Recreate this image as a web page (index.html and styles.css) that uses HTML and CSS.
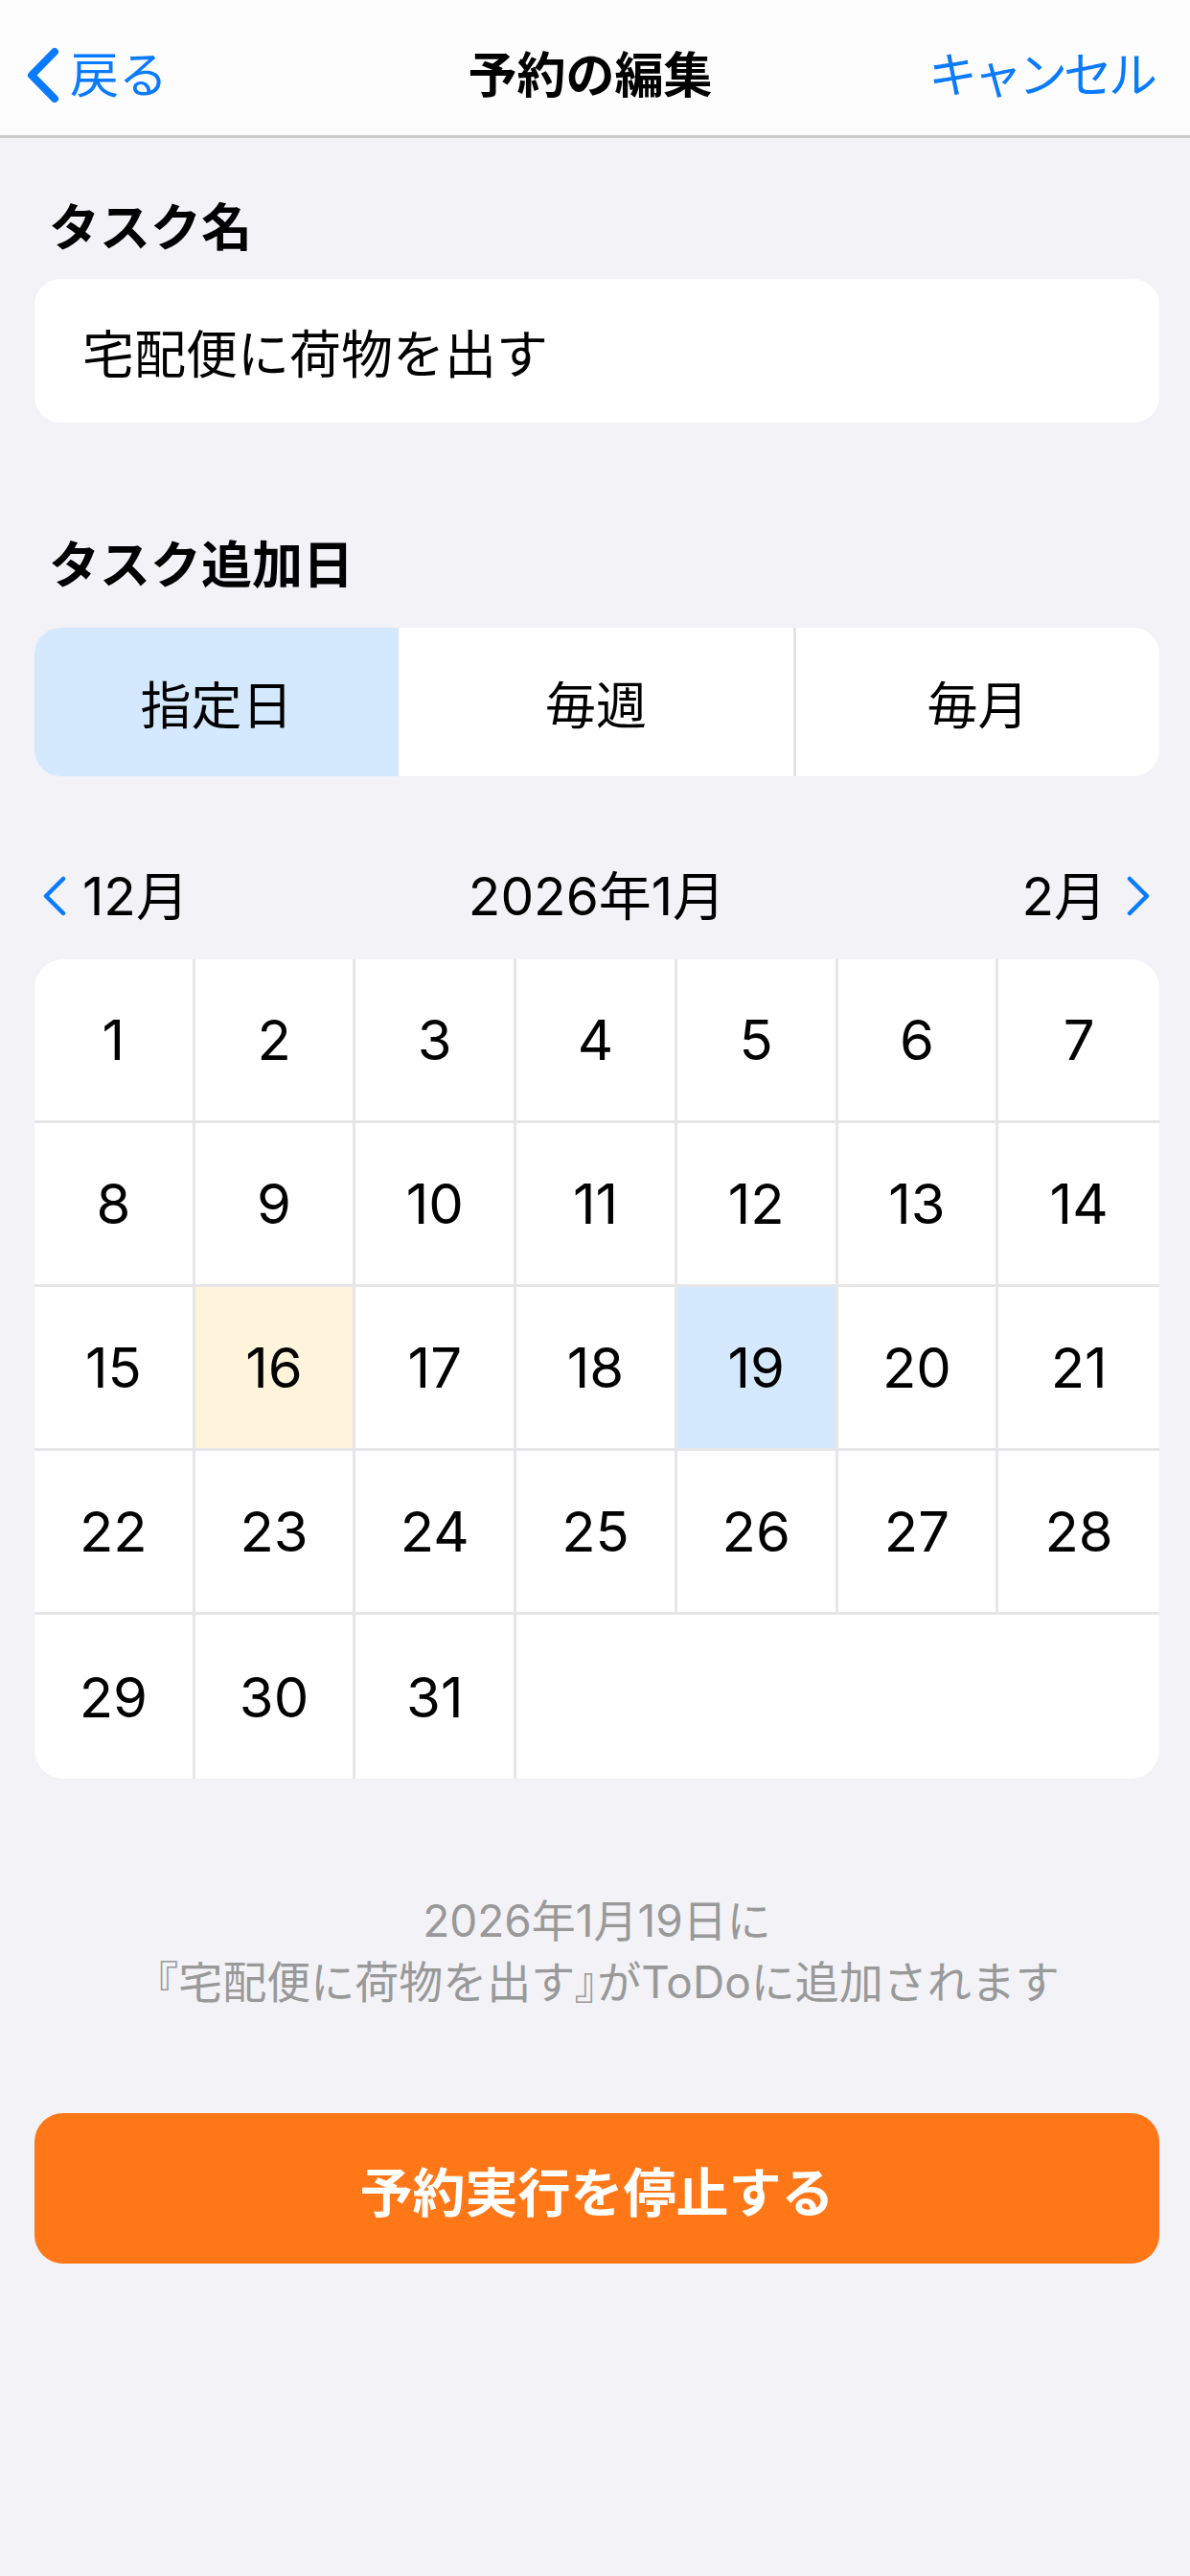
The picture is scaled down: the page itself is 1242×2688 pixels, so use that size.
FILE: index.html
```html
<!DOCTYPE html>
<html lang="ja">
<head>
<meta charset="UTF-8">
<meta name="viewport" content="width=device-width, initial-scale=1.0">
<title>予約の編集</title>
<link rel="stylesheet" href="styles.css">
</head>
<body>
<div class="page">
  <div class="nav">
    <div class="back">
      <svg class="back-icon" width="34" height="57" viewBox="0 0 34 57"><path d="M29 4 L5 28.5 L29 53" fill="none" stroke="#0a7aff" stroke-width="8" stroke-linecap="round" stroke-linejoin="round"/></svg>
      <span>戻る</span>
    </div>
    <div class="title">予約の編集</div>
    <div class="cancel">キャンセル</div>
  </div>

  <div class="content">
    <div class="label first">タスク名</div>
    <div class="field">宅配便に荷物を出す</div>

    <div class="label second">タスク追加日</div>
    <div class="segments">
      <div class="seg on">指定日</div>
      <div class="seg mid">毎週</div>
      <div class="seg">毎月</div>
    </div>

    <div class="month-bar">
      <div class="month-prev">
        <svg width="26" height="42" viewBox="0 0 26 42"><path d="M22 3 L4 21 L22 39" fill="none" stroke="#0a7aff" stroke-width="4.5" stroke-linecap="round" stroke-linejoin="round"/></svg>
        <span>12月</span>
      </div>
      <div class="month-now">2026年1月</div>
      <div class="month-next">
        <span>2月</span>
        <svg width="26" height="42" viewBox="0 0 26 42"><path d="M4 3 L22 21 L4 39" fill="none" stroke="#0a7aff" stroke-width="4.5" stroke-linecap="round" stroke-linejoin="round"/></svg>
      </div>
    </div>

    <div class="calendar">
      <div class="day">1</div>
      <div class="day">2</div>
      <div class="day">3</div>
      <div class="day">4</div>
      <div class="day">5</div>
      <div class="day">6</div>
      <div class="day">7</div>
      <div class="day">8</div>
      <div class="day">9</div>
      <div class="day">10</div>
      <div class="day">11</div>
      <div class="day">12</div>
      <div class="day">13</div>
      <div class="day">14</div>
      <div class="day">15</div>
      <div class="day today">16</div>
      <div class="day">17</div>
      <div class="day">18</div>
      <div class="day picked">19</div>
      <div class="day">20</div>
      <div class="day">21</div>
      <div class="day">22</div>
      <div class="day">23</div>
      <div class="day">24</div>
      <div class="day">25</div>
      <div class="day">26</div>
      <div class="day">27</div>
      <div class="day">28</div>
      <div class="day last">29</div>
      <div class="day last">30</div>
      <div class="day last">31</div>
    </div>

    <p class="note">2026年1月19日に<br>『宅配便に荷物を出す<span class="tight">』</span>がToDoに追加されます</p>

    <div class="stop-btn">予約実行を停止する</div>
  </div>
</div>
</body>
</html>
```

FILE: styles.css
```css
body {
  margin: 0;
  background: #f2f2f7;
  font-family: Inter, "Noto Sans CJK JP", sans-serif;
  color: #000;
}

.page {
  width: 1242px;
  min-height: 2688px;
}

/* navigation bar */
.nav {
  box-sizing: border-box;
  height: 144px;
  background: #fdfdfd;
  border-bottom: 3px solid #cbcbcb;
  display: grid;
  grid-template-columns: 1fr auto 1fr;
  align-items: center;
  padding: 16px 38px 0 28px;
}
.back {
  display: flex;
  align-items: center;
  gap: 11px;
  color: #0a7aff;
  font-size: 51px;
  line-height: 60px;
}
.back-icon {
  display: block;
}
.title {
  font-size: 51px;
  font-weight: 700;
  line-height: 60px;
}
.cancel {
  justify-self: end;
  color: #0a7aff;
  font-size: 51px;
  line-height: 60px;
  letter-spacing: -4px;
}

.content {
  padding: 0 32px 0 36px;
}

.label {
  font-size: 53px;
  font-weight: 700;
  line-height: 60px;
  padding-left: 15px;
}
.label.first {
  margin: 64px 0 23px;
}
.label.second {
  margin: 119px 0 35px;
}

.field {
  height: 150px;
  background: #fff;
  border-radius: 27px;
  display: flex;
  align-items: center;
  padding-left: 50px;
  font-size: 54px;
}

/* segmented picker */
.segments {
  height: 155px;
  display: grid;
  grid-template-columns: 380px 415px 1fr;
  background: #fff;
  border-radius: 27px;
  overflow: hidden;
}
.seg {
  display: flex;
  align-items: center;
  justify-content: center;
  font-size: 53px;
}
.seg.on {
  background: #d4e9fd;
}
.seg.mid {
  border-right: 3px solid #e4e4e6;
}

/* month header */
.month-bar {
  margin-top: 95px;
  height: 60px;
  display: grid;
  grid-template-columns: 1fr auto 1fr;
  align-items: center;
  font-size: 55px;
  line-height: 60px;
}
.month-prev {
  display: flex;
  align-items: center;
  gap: 16px;
  padding-left: 8px;
}
.month-next {
  justify-self: end;
  display: flex;
  align-items: center;
  gap: 20px;
  padding-right: 9px;
}
.month-prev svg, .month-next svg {
  display: block;
}

/* calendar grid */
.calendar {
  margin-top: 36px;
  background: #fff;
  border-radius: 30px;
  overflow: hidden;
  display: grid;
  grid-template-columns: repeat(7, 1fr);
  grid-auto-rows: 171px;
}
.day {
  display: flex;
  align-items: center;
  justify-content: center;
  font-size: 58px;
  border-right: 3px solid #e6e6e9;
  border-bottom: 3px solid #e6e6e9;
}
.day:nth-child(7n) {
  border-right: none;
}
.day.last {
  border-bottom: none;
}
.day.today {
  background: #fef4dc;
}
.day.picked {
  background: #d4e9fd;
}

.note {
  margin: 116px 0 0;
  text-align: center;
  color: #999999;
  font-size: 46px;
  line-height: 64px;
}
.tight {
  font-feature-settings: "palt";
}

.stop-btn {
  margin-top: 105px;
  height: 157px;
  border-radius: 30px;
  background: #ff7716;
  color: #fff;
  font-size: 55px;
  font-weight: 700;
  display: flex;
  align-items: center;
  justify-content: center;
}
```
